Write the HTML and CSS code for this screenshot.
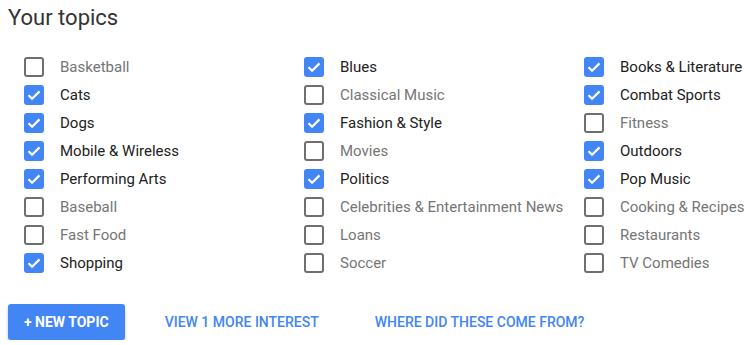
FILE: index.html
```html
<!DOCTYPE html>
<html lang="en">
<head>
  <meta charset="UTF-8">
  <meta name="viewport" content="width=device-width, initial-scale=1.0">
  <title>Your topics</title>
  <link rel="stylesheet" href="styles.css">
</head>
<body>
  <div class="topics-container">
    <h1>Your topics</h1>
    <div class="topic-grid">
      <label class="topic"><span class="box"></span>Basketball</label>
      <label class="topic checked"><span class="box"><svg viewBox="0 0 20 20"><path d="M4.5 10.2l3.6 3.6 7.4-7.4"/></svg></span>Blues</label>
      <label class="topic checked"><span class="box"><svg viewBox="0 0 20 20"><path d="M4.5 10.2l3.6 3.6 7.4-7.4"/></svg></span>Books &amp; Literature</label>

      <label class="topic checked"><span class="box"><svg viewBox="0 0 20 20"><path d="M4.5 10.2l3.6 3.6 7.4-7.4"/></svg></span>Cats</label>
      <label class="topic"><span class="box"></span>Classical Music</label>
      <label class="topic checked"><span class="box"><svg viewBox="0 0 20 20"><path d="M4.5 10.2l3.6 3.6 7.4-7.4"/></svg></span>Combat Sports</label>

      <label class="topic checked"><span class="box"><svg viewBox="0 0 20 20"><path d="M4.5 10.2l3.6 3.6 7.4-7.4"/></svg></span>Dogs</label>
      <label class="topic checked"><span class="box"><svg viewBox="0 0 20 20"><path d="M4.5 10.2l3.6 3.6 7.4-7.4"/></svg></span>Fashion &amp; Style</label>
      <label class="topic"><span class="box"></span>Fitness</label>

      <label class="topic checked"><span class="box"><svg viewBox="0 0 20 20"><path d="M4.5 10.2l3.6 3.6 7.4-7.4"/></svg></span>Mobile &amp; Wireless</label>
      <label class="topic"><span class="box"></span>Movies</label>
      <label class="topic checked"><span class="box"><svg viewBox="0 0 20 20"><path d="M4.5 10.2l3.6 3.6 7.4-7.4"/></svg></span>Outdoors</label>

      <label class="topic checked"><span class="box"><svg viewBox="0 0 20 20"><path d="M4.5 10.2l3.6 3.6 7.4-7.4"/></svg></span>Performing Arts</label>
      <label class="topic checked"><span class="box"><svg viewBox="0 0 20 20"><path d="M4.5 10.2l3.6 3.6 7.4-7.4"/></svg></span>Politics</label>
      <label class="topic checked"><span class="box"><svg viewBox="0 0 20 20"><path d="M4.5 10.2l3.6 3.6 7.4-7.4"/></svg></span>Pop Music</label>

      <label class="topic"><span class="box"></span>Baseball</label>
      <label class="topic"><span class="box"></span>Celebrities &amp; Entertainment News</label>
      <label class="topic"><span class="box"></span>Cooking &amp; Recipes</label>

      <label class="topic"><span class="box"></span>Fast Food</label>
      <label class="topic"><span class="box"></span>Loans</label>
      <label class="topic"><span class="box"></span>Restaurants</label>

      <label class="topic checked"><span class="box"><svg viewBox="0 0 20 20"><path d="M4.5 10.2l3.6 3.6 7.4-7.4"/></svg></span>Shopping</label>
      <label class="topic"><span class="box"></span>Soccer</label>
      <label class="topic"><span class="box"></span>TV Comedies</label>
    </div>
    <div class="actions">
      <button type="button" class="new-topic">+ New topic</button>
      <a href="#" class="link view-more">View 1 more interest</a>
      <a href="#" class="link">Where did these come from?</a>
    </div>
  </div>
</body>
</html>
```

FILE: styles.css
```css
body {
  font-family: Roboto, "Liberation Sans", Arial, sans-serif;
  margin: 0;
  padding: 0;
  background-color: #fff;
  color: #212121;
}
.topics-container {
  padding: 0 8px;
}
.topics-container h1 {
  font-size: 22px;
  font-weight: 400;
  line-height: 28px;
  color: #333;
  margin: 4px 0 21px;
}
.topic-grid {
  display: grid;
  grid-template-columns: 280px 280px auto;
  grid-auto-rows: 28px;
  padding-left: 16px;
}
.topic {
  display: flex;
  align-items: center;
  font-size: 15px;
  color: #757575;
  white-space: nowrap;
}
.topic.checked {
  color: #212121;
}
.box {
  box-sizing: border-box;
  width: 20px;
  height: 20px;
  border: 2px solid #6f6f6f;
  border-radius: 3px;
  margin-right: 16px;
  flex-shrink: 0;
  display: flex;
}
.topic.checked .box {
  background-color: #4285f4;
  border: none;
}
.box svg {
  width: 20px;
  height: 20px;
  fill: none;
  stroke: #fff;
  stroke-width: 2.2;
}
.actions {
  display: flex;
  align-items: center;
  margin-top: 27px;
}
.new-topic {
  height: 36px;
  padding: 0 16px;
  background-color: #4285f4;
  color: #fff;
  border: none;
  border-radius: 3px;
  box-shadow: 0 2px 3px rgba(0, 0, 0, 0.25);
  font-family: inherit;
  font-size: 14px;
  font-weight: 700;
  text-transform: uppercase;
  cursor: pointer;
}
.link {
  color: #4285f4;
  font-size: 14px;
  font-weight: 500;
  text-transform: uppercase;
  text-decoration: none;
}
.view-more {
  margin: 0 56px 0 40px;
}
```
